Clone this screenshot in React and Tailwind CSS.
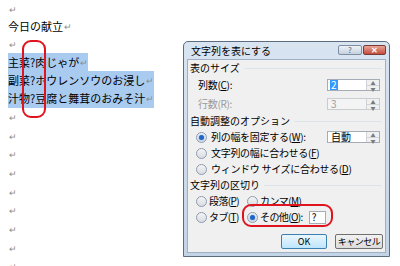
const jp = { fontFamily: '"Noto Sans CJK JP", "Noto Sans", sans-serif' };

function Mark() {
  return <span className="text-[9px] leading-none text-[#8c8c8c] ml-[1px]">↵</span>;
}

function DocLine({ h, children, hl }) {
  return (
    <div className={`flex items-center ${h}`}>
      {hl ? (
        <span className="inline-flex h-full items-center bg-[#a9cbf0]">{children}</span>
      ) : (
        children
      )}
    </div>
  );
}

function Radio({ on }) {
  return (
    <span className="relative inline-flex w-[11px] h-[11px] rounded-full border border-[#8e9cad] bg-gradient-to-b from-[#f4f4f4] to-[#d9dde2] items-center justify-center shrink-0">
      {on && <span className="w-[5px] h-[5px] rounded-full bg-[#1f64c8] shadow-[0_0_2px_#6aa8f0]" />}
    </span>
  );
}

function Spin({ value, selected, disabled }) {
  return (
    <div
      className={`flex h-[12px] w-[53px] border ${disabled ? "border-[#c9ccd0] bg-[#f4f4f4]" : "border-[#a5acb5] bg-white"}`}
    >
      <div className="flex-1 flex items-center pl-[2px]">
        <span
          className={`text-[10px] leading-[10px] px-[1px] whitespace-nowrap ${selected ? "bg-[#3399ff] text-white" : disabled ? "text-[#9a9a9a]" : "text-black"}`}
        >
          {value}
        </span>
      </div>
      <div className="w-[13px] flex flex-col border-l border-[#d0d4d9] bg-[#eef0f2]">
        <div className="flex-1 flex items-center justify-center text-[5px] leading-none text-[#7a7a7a] border-b border-[#d0d4d9]">▲</div>
        <div className="flex-1 flex items-center justify-center text-[5px] leading-none text-[#7a7a7a]">▼</div>
      </div>
    </div>
  );
}

function GroupHead({ text }) {
  return (
    <div className="flex items-center h-[16px] pr-[3px]">
      <span className="text-[10px] leading-none text-black whitespace-nowrap">{text}</span>
      <div className="flex-1 h-px bg-[#dde3ea] ml-[4px]" />
    </div>
  );
}

function Label({ children, gray, tight }) {
  return (
    <span
      className={`text-[10px] leading-none whitespace-nowrap ${tight ? "tracking-[-0.6px]" : "tracking-[-0.3px]"} ${gray ? "text-[#9a9a9a]" : "text-black"}`}
    >
      {children}
    </span>
  );
}

export default function App() {
  return (
    <div className="relative w-[400px] h-[266px] bg-white overflow-hidden" style={jp}>
      {/* document */}
      <div className="flex flex-col pt-[1px] pl-[8px] text-[11px] leading-none text-black">
        <DocLine h="h-[17px]"><Mark /></DocLine>
        <DocLine h="h-[17px]"><span>今日の献立</span><Mark /></DocLine>
        <DocLine h="h-[18px]"><Mark /></DocLine>
        <DocLine h="h-[18px]" hl><span>主菜?肉じゃが</span><Mark /></DocLine>
        <DocLine h="h-[18px]" hl><span>副菜?ホウレンソウのお浸し</span><Mark /></DocLine>
        <DocLine h="h-[19px]" hl><span>汁物?豆腐と舞茸のおみそ汁</span><Mark /></DocLine>
        {Array.from({ length: 9 }).map((_, i) => (
          <DocLine key={i} h="h-[18.7px]"><Mark /></DocLine>
        ))}
      </div>

      {/* red mark on the document */}
      <div className="absolute left-[22px] top-[40px] w-[24px] h-[78px] border-2 border-[#e0141e] rounded-[9px]" />

      {/* dialog */}
      <div className="absolute left-[183px] top-[41px] w-[207px] h-[216px] flex flex-col border border-[#5d6d80] rounded-t-[5px] bg-gradient-to-b from-[#d9e4f1] to-[#c4d4e7] px-[3px] pb-[3px]">
        <div className="flex items-center h-[17px] shrink-0">
          <span className="text-[10px] leading-none text-black ml-[4px] whitespace-nowrap">文字列を表にする</span>
          <div className="ml-auto flex gap-[1px] -mt-[2px]">
            <div className="w-[24px] h-[10px] rounded-[2px] border border-[#7d8ea3] bg-gradient-to-b from-[#eef2f7] to-[#c5d1de] flex items-center justify-center text-[8px] leading-none text-[#5a6675]">?</div>
            <div className="w-[23px] h-[10px] rounded-[2px] border border-[#7a3a36] bg-gradient-to-b from-[#e8a497] to-[#c34a3c] flex items-center justify-center text-[8px] leading-none font-bold text-white">✕</div>
          </div>
        </div>
        <div className="flex-1 flex flex-col bg-[#f0f0f0] border border-[#9fb0c4] pl-[2px]">
          <GroupHead text="表のサイズ" />
          <div className="flex items-center h-[18px] pl-[8px] pr-[5px]">
            <Label>列数(<span className="underline">C</span>):</Label>
            <div className="ml-auto"><Spin value="2" selected /></div>
          </div>
          <div className="flex items-center h-[19px] pl-[8px] pr-[5px]">
            <Label gray>行数(R):</Label>
            <div className="ml-auto"><Spin value="3" disabled /></div>
          </div>
          <GroupHead text="自動調整のオプション" />
          <div className="flex items-center h-[16px] pl-[6px] pr-[5px] gap-[4px]">
            <Radio on />
            <Label>列の幅を固定する(<span className="underline">W</span>):</Label>
            <div className="ml-auto"><Spin value="自動" /></div>
          </div>
          <div className="flex items-center h-[16px] pl-[6px] gap-[4px]">
            <Radio />
            <Label>文字列の幅に合わせる(<span className="underline">F</span>)</Label>
          </div>
          <div className="flex items-center h-[16px] pl-[6px] gap-[4px]">
            <Radio />
            <Label>ウィンドウ サイズに合わせる(<span className="underline">D</span>)</Label>
          </div>
          <GroupHead text="文字列の区切り" />
          <div className="flex items-center h-[16px] pl-[6px]">
            <div className="flex items-center gap-[2px] w-[51px] shrink-0">
              <Radio />
              <Label tight>段落(<span className="underline">P</span>)</Label>
            </div>
            <div className="flex items-center gap-[2px]">
              <Radio />
              <Label tight>カンマ(<span className="underline">M</span>)</Label>
            </div>
          </div>
          <div className="flex items-center h-[16px] pl-[6px]">
            <div className="flex items-center gap-[2px] w-[51px] shrink-0">
              <Radio />
              <Label tight>タブ(<span className="underline">T</span>)</Label>
            </div>
            <div className="flex items-center gap-[2px]">
              <Radio on />
              <Label tight>その他(<span className="underline">O</span>):</Label>
              <div className="ml-[4px] w-[17px] h-[13px] border border-[#a5acb5] bg-white flex items-center pl-[2px] text-[10px] leading-none">?</div>
            </div>
          </div>
          <div className="flex justify-end gap-[8px] mt-[9px] pr-[2px]">
            <div className="w-[46px] h-[15px] rounded-[2px] border border-[#3c7fb1] bg-gradient-to-b from-[#eaf6fd] to-[#bee6fd] flex items-center justify-center text-[9px] leading-none whitespace-nowrap">OK</div>
            <div className="w-[48px] h-[15px] rounded-[2px] border border-[#707070] bg-gradient-to-b from-[#f2f2f2] to-[#dcdcdc] flex items-center justify-center text-[9px] leading-none whitespace-nowrap tracking-[-0.5px]">キャンセル</div>
          </div>
        </div>
      </div>

      {/* red mark on the dialog */}
      <div className="absolute left-[242px] top-[204px] w-[91px] h-[23px] border-2 border-[#e0141e] rounded-[9px]" />
    </div>
  );
}
